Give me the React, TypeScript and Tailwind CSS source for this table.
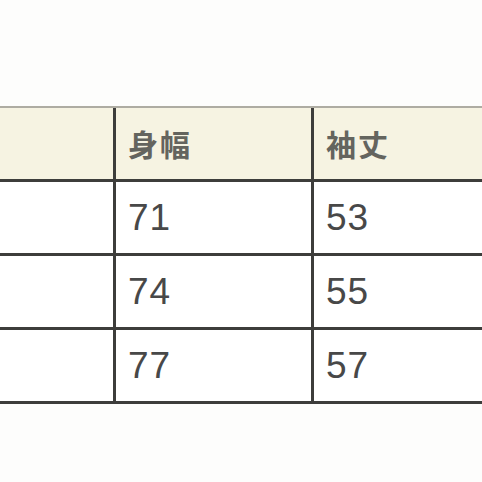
const rows = [
  ["71", "53"],
  ["74", "55"],
  ["77", "57"],
];

export default function App() {
  return (
    <div className="w-[482px] h-[482px] bg-[#fdfdfc] overflow-hidden pt-[106px]">
      <div className="w-[560px] border-t-2 border-[#aeaca2] font-['Liberation_Sans','Noto_Sans_CJK_JP',sans-serif]">
        <div className="grid grid-cols-[113px_198px_1fr] h-[74px] bg-[#f6f3e2] border-b-[3px] border-[#3d3d3b]">
          <div />
          <div className="border-l-[3px] border-[#3d3d3b] flex items-center pl-[12px] text-[30px] font-bold tracking-[2px] text-[#64645e] font-['Noto_Sans_CJK_JP',sans-serif]">
            身幅
          </div>
          <div className="border-l-[3px] border-[#3d3d3b] flex items-center pl-[12px] text-[30px] font-bold tracking-[2px] text-[#64645e] font-['Noto_Sans_CJK_JP',sans-serif]">
            袖丈
          </div>
        </div>
        {rows.map((r, i) => (
          <div
            key={i}
            className="grid grid-cols-[113px_198px_1fr] h-[74px] bg-white border-b-[3px] border-[#3d3d3b]"
          >
            <div />
            <div className="border-l-[3px] border-[#3d3d3b] flex items-center pl-[12px] text-[37px] tracking-[1px] text-[#484848]">
              {r[0]}
            </div>
            <div className="border-l-[3px] border-[#3d3d3b] flex items-center pl-[12px] text-[37px] tracking-[1px] text-[#484848]">
              {r[1]}
            </div>
          </div>
        ))}
      </div>
    </div>
  );
}
